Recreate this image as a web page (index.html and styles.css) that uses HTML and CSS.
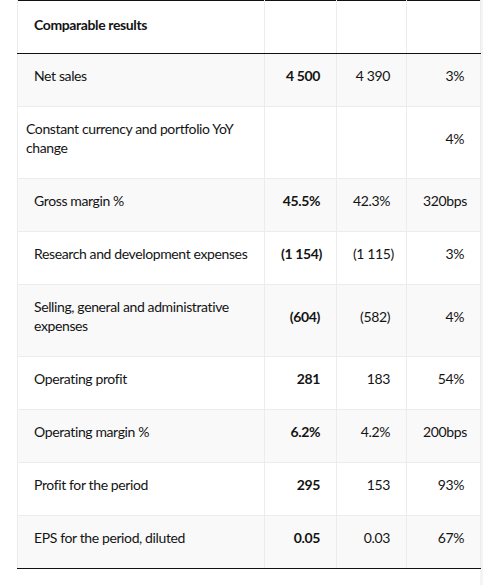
FILE: index.html
```html
<!DOCTYPE html>
<html lang="en">
<head>
<meta charset="utf-8">
<title>Comparable results</title>
<link rel="stylesheet" href="styles.css">
</head>
<body>
<div class="wrap">
<table class="results">
  <colgroup>
    <col class="c-label"><col class="c-num"><col class="c-num2"><col class="c-num3">
  </colgroup>
  <thead>
    <tr><th class="label">Comparable results</th><th></th><th></th><th></th></tr>
  </thead>
  <tbody>
    <tr class="alt"><td class="label">Net sales</td><td class="num b">4 500</td><td class="num">4 390</td><td class="num">3%</td></tr>
    <tr><td class="label tight">Constant currency and portfolio YoY change</td><td class="num b"></td><td class="num"></td><td class="num">4%</td></tr>
    <tr class="alt"><td class="label">Gross margin %</td><td class="num b">45.5%</td><td class="num">42.3%</td><td class="num">320bps</td></tr>
    <tr><td class="label">Research and development expenses</td><td class="num b">(1 154)</td><td class="num">(1 115)</td><td class="num">3%</td></tr>
    <tr class="alt"><td class="label">Selling, general and administrative expenses</td><td class="num b">(604)</td><td class="num">(582)</td><td class="num">4%</td></tr>
    <tr><td class="label">Operating profit</td><td class="num b">281</td><td class="num">183</td><td class="num">54%</td></tr>
    <tr class="alt"><td class="label">Operating margin %</td><td class="num b">6.2%</td><td class="num">4.2%</td><td class="num">200bps</td></tr>
    <tr><td class="label">Profit for the period</td><td class="num b">295</td><td class="num">153</td><td class="num">93%</td></tr>
    <tr class="alt last"><td class="label">EPS for the period, diluted</td><td class="num b">0.05</td><td class="num">0.03</td><td class="num">67%</td></tr>
  </tbody>
</table>
</div>
</body>
</html>
```
FILE: styles.css
```css
html, body {
  margin: 0;
  padding: 0;
  background: #ffffff;
}
body {
  font-family: Lato, "Open Sans", sans-serif;
  font-size: 14px;
  color: #141414;
}
.wrap {
  margin-left: 17px;
  width: 463px;
  min-height: 585px;
  border-right: 3px solid #f4f4f4;
}
.results {
  width: 463px;
  border-collapse: collapse;
  table-layout: fixed;
  border-top: 1px solid #111;
  border-bottom: 1px solid #111;
}
.c-label { width: 247px; }
.c-num { width: 72px; }
.c-num2 { width: 70px; }
.c-num3 { width: 74px; }
.results th, .results td {
  padding: 12px 16px 21px 16px;
  line-height: 19px;
  vertical-align: middle;
  border-left: 1px solid #ececec;
  border-right: 1px solid #ececec;
  border-bottom: 1px solid #ececec;
  letter-spacing: -0.38px;
}
.results th {
  text-align: left;
  font-weight: 700;
  padding-top: 14px;
  padding-bottom: 19px;
  border-bottom: 1px solid #111;
}
.results td.label { text-align: left; }
.results td.tight { padding-left: 8px; }
.results td.num { text-align: right; white-space: nowrap; }
.results td.b { font-weight: 700; }
.results tr.alt td { background: #f9f9f9; }
.results tr.last td { border-bottom: 1px solid #111; }
```
